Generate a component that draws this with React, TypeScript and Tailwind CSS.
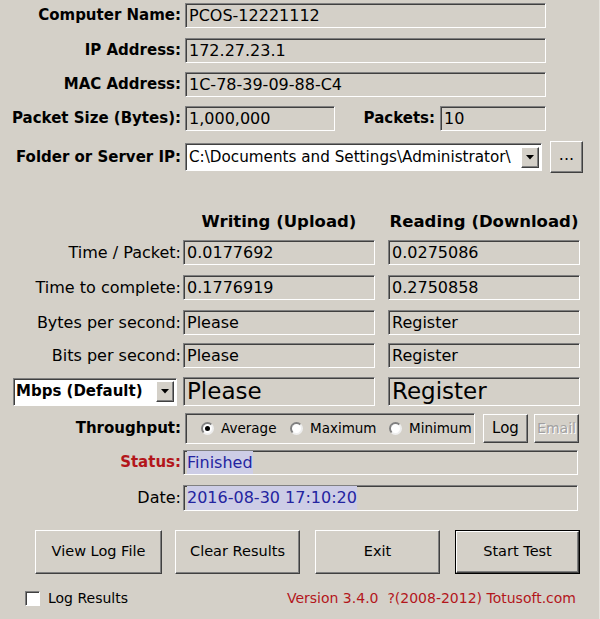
import type { ReactNode } from "react";

const sunken =
  "border border-t-[#808080] border-l-[#808080] border-b-white border-r-white shadow-[inset_1px_1px_0_#404040]";
const raised =
  "border border-t-white border-l-white border-b-[#404040] border-r-[#404040] shadow-[inset_-1px_-1px_0_#808080] bg-[#d4d0c8]";

function Field({ children, className = "" }: { children?: ReactNode; className?: string }) {
  return (
    <div className={`flex items-center pl-[3px] overflow-hidden whitespace-nowrap bg-[#d4d0c8] ${sunken} ${className}`}>
      {children}
    </div>
  );
}

function Label({ children, className = "" }: { children: ReactNode; className?: string }) {
  return <div className={`w-[181px] shrink-0 text-right whitespace-nowrap ${className}`}>{children}</div>;
}

function DropArrow() {
  return (
    <div className={`w-[18px] h-[21px] shrink-0 flex items-center justify-center ${raised}`}>
      <svg width="8" height="5" viewBox="0 0 8 5">
        <path d="M0 0 H8 L4 4.5 Z" fill="#000" />
      </svg>
    </div>
  );
}

function Radio({ checked, label, className = "" }: { checked?: boolean; label: string; className?: string }) {
  return (
    <div className={`flex items-center gap-[7px] ${className}`}>
      <div className="w-[13px] h-[13px] rounded-full bg-white border-2 border-t-[#808080] border-l-[#808080] border-b-[#eeeeee] border-r-[#eeeeee] flex items-center justify-center">
        {checked && <div className="w-[5px] h-[5px] rounded-full bg-black" />}
      </div>
      <span>{label}</span>
    </div>
  );
}

function Btn({ children, className = "" }: { children: ReactNode; className?: string }) {
  return <div className={`flex items-center justify-center ${raised} ${className}`}>{children}</div>;
}

export default function App() {
  return (
    <div className="w-[600px] h-[619px] overflow-hidden bg-[#d4d0c8] text-[16px] text-black font-['DejaVu_Sans',sans-serif] border-r border-r-[#e6e4de]">
      <div className="flex flex-col pt-[3px]">
        {/* machine info */}
        <div className="flex items-center h-[25px]">
          <Label className="font-bold text-[15px]">Computer Name:</Label>
          <Field className="ml-[4px] w-[361px] h-full">PCOS-12221112</Field>
        </div>
        <div className="flex items-center h-[25px] mt-[10px]">
          <Label className="font-bold text-[15px]">IP Address:</Label>
          <Field className="ml-[4px] w-[361px] h-full">172.27.23.1</Field>
        </div>
        <div className="flex items-center h-[25px] mt-[9px]">
          <Label className="font-bold text-[15px]">MAC Address:</Label>
          <Field className="ml-[4px] w-[361px] h-full">1C-78-39-09-88-C4</Field>
        </div>
        <div className="flex items-center h-[25px] mt-[9px]">
          <Label className="font-bold text-[15px]">Packet Size (Bytes):</Label>
          <Field className="ml-[4px] w-[150px] h-full">1,000,000</Field>
          <div className="w-[100px] text-right font-bold text-[15px]">Packets:</div>
          <Field className="ml-[5px] w-[106px] h-full">10</Field>
        </div>
        <div className="flex items-center h-[32px] mt-[10px]">
          <Label className="font-bold text-[15px]">Folder or Server IP:</Label>
          <div className={`ml-[4px] w-[357px] h-[28px] flex items-center bg-white pl-[3px] pr-[2px] text-[15.2px] ${sunken}`}>
            <span className="flex-1 overflow-hidden whitespace-nowrap">C:\Documents and Settings\Administrator\</span>
            <DropArrow />
          </div>
          <Btn className="ml-[8px] w-[33px] h-[32px]">
            <span className="-mt-[4px]">...</span>
          </Btn>
        </div>

        {/* results */}
        <div className="flex h-[20px] mt-[39px] pl-[183px] gap-[13px] font-bold text-[16.5px] leading-[20px]">
          <div className="w-[192px] text-center whitespace-nowrap">Writing (Upload)</div>
          <div className="w-[192px] text-center whitespace-nowrap">Reading (Download)</div>
        </div>
        <div className="flex items-center h-[25px] mt-[8px]">
          <Label>Time / Packet:</Label>
          <Field className="ml-[2px] w-[192px] h-full">0.0177692</Field>
          <Field className="ml-[13px] w-[192px] h-full">0.0275086</Field>
        </div>
        <div className="flex items-center h-[25px] mt-[10px]">
          <Label>Time to complete:</Label>
          <Field className="ml-[2px] w-[192px] h-full">0.1776919</Field>
          <Field className="ml-[13px] w-[192px] h-full">0.2750858</Field>
        </div>
        <div className="flex items-center h-[25px] mt-[10px]">
          <Label>Bytes per second:</Label>
          <Field className="ml-[2px] w-[192px] h-full">Please</Field>
          <Field className="ml-[13px] w-[192px] h-full">Register</Field>
        </div>
        <div className="flex items-center h-[25px] mt-[8px]">
          <Label>Bits per second:</Label>
          <Field className="ml-[2px] w-[192px] h-full">Please</Field>
          <Field className="ml-[13px] w-[192px] h-full">Register</Field>
        </div>
        <div className="flex items-center h-[29px] mt-[9px] pl-[13px]">
          <div className={`w-[164px] h-[28px] flex items-center bg-white pl-[2px] pr-[2px] font-bold text-[15px] ${sunken}`}>
            <span className="flex-1 whitespace-nowrap">Mbps (Default)</span>
            <DropArrow />
          </div>
          <Field className="ml-[6px] w-[192px] h-full text-[23px]">Please</Field>
          <Field className="ml-[13px] w-[192px] h-full text-[23px]">Register</Field>
        </div>

        {/* throughput */}
        <div className="flex items-center h-[31px] mt-[7px]">
          <Label className="font-bold text-[15px]">Throughput:</Label>
          <div className={`ml-[4px] w-[290px] h-full flex items-center pl-[15px] text-[13.5px] ${sunken}`}>
            <Radio checked label="Average" className="w-[89px]" />
            <Radio label="Maximum" className="w-[99px]" />
            <Radio label="Minimum" />
          </div>
          <Btn className="ml-[8px] w-[45px] h-[29px] text-[15px]">Log</Btn>
          <Btn className="ml-[6px] w-[45px] h-[29px] text-[#a0a0a0] [text-shadow:1px_1px_0_#fff] text-[14px]">Email</Btn>
        </div>
        <div className="flex items-center h-[25px] mt-[6px]">
          <Label className="font-bold text-[15px] text-[#b3161b]">Status:</Label>
          <Field className="ml-[2px] w-[395px] h-full">
            <span className="bg-[#cdcde6] text-[#2424a0]">Finished</span>
          </Field>
        </div>
        <div className="flex items-center h-[26px] mt-[10px]">
          <Label>Date:</Label>
          <Field className="ml-[2px] w-[395px] h-full">
            <span className="bg-[#cdcde6] text-[#2424a0]">2016-08-30 17:10:20</span>
          </Field>
        </div>

        {/* buttons */}
        <div className="flex h-[44px] mt-[19px] pl-[35px] text-[14.5px]">
          <Btn className="w-[127px] h-full">View Log File</Btn>
          <Btn className="ml-[13px] w-[125px] h-full">Clear Results</Btn>
          <Btn className="ml-[15px] w-[125px] h-full">Exit</Btn>
          <div className="ml-[15px] w-[125px] h-full border border-black flex">
            <Btn className="flex-1">Start Test</Btn>
          </div>
        </div>

        <div className="flex items-center h-[20px] mt-[14px] pl-[25px] text-[14px]">
          <div className={`w-[15px] h-[15px] bg-white ${sunken}`} />
          <span className="ml-[8px]">Log Results</span>
          <span className="ml-auto mr-[23px] text-[#b3161b] whitespace-pre">Version 3.4.0  ?(2008-2012) Totusoft.com</span>
        </div>
      </div>
    </div>
  );
}
